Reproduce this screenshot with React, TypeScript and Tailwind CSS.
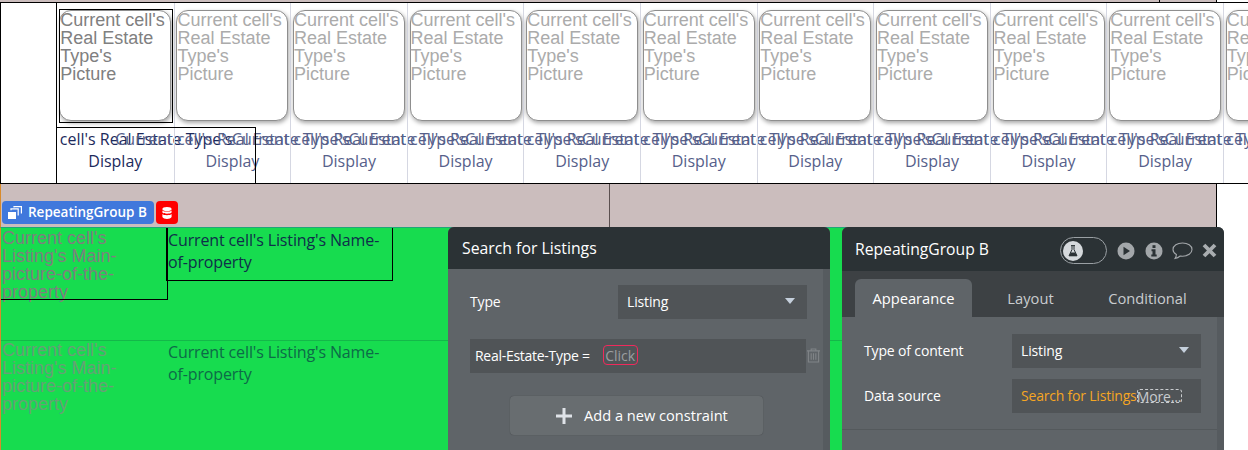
import React from 'react';

const cells = Array.from({ length: 11 });
const sans = "font-['Open_Sans',sans-serif]";
const arial = "font-['Liberation_Sans',Arial,sans-serif]";

const Caret = () => <span className="w-0 h-0 border-x-[5px] border-x-transparent border-t-[6px] border-t-[#c5d0dc]" />;

const RepeatIcon = () => (
  <svg width="14" height="13" viewBox="0 0 14 13" fill="none">
    <rect x="0" y="6" width="8" height="7" fill="#fff" />
    <path d="M3 4.2V2.8H10.2V9.5" stroke="#fff" strokeWidth="1.2" />
    <path d="M6 1.6V.6H13.4V7.5" stroke="#fff" strokeWidth="1.2" />
  </svg>
);

const DbIcon = () => (
  <svg width="10" height="12" viewBox="0 0 10 12" fill="#fff">
    <ellipse cx="5" cy="2" rx="4.6" ry="2" />
    <path d="M.4 3.4C1.4 5 8.6 5 9.6 3.4V5.6C8.6 7.2 1.4 7.2.4 5.6Z" />
    <path d="M.4 7C1.4 8.6 8.6 8.6 9.6 7V10C8.6 12.6 1.4 12.6.4 10Z" />
  </svg>
);

const Header = () => (
  <div className="absolute left-[1060px] top-[237px] flex items-center">
    <div className="w-[47px] h-[27px] rounded-full border border-[#9aa0a4] flex items-center pl-[2px]">
      <span className="w-5 h-5 rounded-full bg-[#d5d9dc] flex items-center justify-center">
        <svg width="10" height="12" viewBox="0 0 10 12">
          <path d="M3 .6H7M4 .6V4.500L1 10.800H9L6 4.500V.6" fill="none" stroke="#2b3235" strokeWidth="1" />
          <path d="M2.700 7.500H7.300L9 11H1Z" fill="#2b3235" />
        </svg>
      </span>
    </div>
    <svg className="ml-[10px]" width="18" height="18" viewBox="0 0 18 18">
      <circle cx="9" cy="9" r="8.5" fill="#a3a7aa" />
      <path d="M6.5 4.8 13 9 6.5 13.2Z" fill="#2b3235" />
    </svg>
    <svg className="ml-[10px]" width="18" height="18" viewBox="0 0 18 18">
      <circle cx="9" cy="9" r="8.5" fill="#a3a7aa" />
      <rect x="7.5" y="3.2" width="3" height="2.8" fill="#2b3235" />
      <path d="M6.5 7.2H10.5V12.6H11.7V14.6H6.3V12.6H7.500V9.200H6.500Z" fill="#2b3235" />
    </svg>
    <svg className="ml-[9px]" width="21" height="18" viewBox="0 0 21 18" fill="none">
      <path d="M10.5 1C5.3 1 1 3.6 1 7.5c0 2.2 1.4 3.9 3.4 5 0 1.4-.6 2.9-1.4 4 2.2-.3 4-1.4 5.2-2.5.9.1 1.7.2 2.4.2 5.2 0 9.4-2.9 9.400-6.700S15.700 1 10.500 1Z" stroke="#a3a7aa" strokeWidth="1.1" />
    </svg>
    <svg className="ml-[9px]" width="15" height="15" viewBox="0 0 15 15">
      <path d="M2 2 13 13M13 2 2 13" stroke="#a9adb0" strokeWidth="3.8" />
    </svg>
  </div>
);

export default function App() {
  return (
    <div className={`relative w-[1248px] h-[450px] overflow-hidden bg-white ${sans}`}>
      {/* top strip */}
      <div className="flex h-[3px]">
        <div className="w-[1160px] bg-[#cbbdbd] border-b border-black border-r" />
        <div className="w-[57px] bg-[#cbbdbd] border-b border-black border-r" />
        <div className="flex-1 bg-white border-b border-black" />
      </div>

      {/* first repeating group */}
      <div className="flex h-[181px] border-b border-black border-l border-l-black">
        <div className="w-[56px] shrink-0 border-r border-black" />
        <div className="flex-1 flex overflow-hidden">
          {cells.map((_, i) => (
            <div key={i} className="w-[116.6px] shrink-0 h-full border-l border-[#d5d7e2] first:border-l-0 relative flex flex-col items-center">
              <div className="mt-[7px] w-[112px] h-[111px] shrink-0 rounded-xl border border-[#8e8e8e] bg-white shadow-[1px_2px_4px_rgba(0,0,0,0.35)]">
                <p className={`${arial} text-[18px] leading-[18px] w-[110px] ${i === 0 ? 'text-[#808080]' : 'text-[#ababab]'}`}>
                  Current cell's Real Estate Type's Picture
                </p>
              </div>
              <div className={`mt-[7px] text-[16px] leading-[22px] text-center whitespace-nowrap ${i === 0 ? 'text-[#1c2a5c]' : 'text-[#56608a]'}`}>
                <p>Current cell's Real Estate Type's</p>
                <p>Display</p>
              </div>
            </div>
          ))}
        </div>
      </div>

      {/* gap band with the group's tabs */}
      <div className="relative flex h-[43px] w-[1217px] bg-[#cbbdbd] border-l border-l-[#d98a2b] border-r border-r-black">
        <div className="w-[609px] border-r border-[#5b5050]" />
        <div className="absolute left-[1px] top-[17px] flex gap-[2px]">
          <div className="h-[23px] w-[152px] rounded-sm bg-[#4078dc] text-white text-[13.5px] font-semibold flex items-center pl-[6px] gap-[6px]">
            <RepeatIcon />
            <span>RepeatingGroup B</span>
          </div>
          <div className="w-[22px] h-[23px] rounded-sm bg-[#ff0000] flex items-center justify-center">
            <DbIcon />
          </div>
        </div>
      </div>

      {/* second repeating group */}
      <div className="w-[1217px] h-[223px] bg-[#17dc4f] border-t border-t-[#1fa67a] border-l border-l-[#d98a2b] flex flex-col">
        {[0, 1].map((row) => (
          <div key={row} className={`flex shrink-0 ${row === 0 ? 'h-[113px] border-b border-[#14b84a]' : 'h-[109px]'}`}>
            <p className={`${arial} w-[166px] text-[18px] leading-[18px] pl-[1px] ${row === 0 ? 'pt-[1px] text-[#7f7f7f]' : 'text-[#67a077]'}`}>
              Current cell's Listing's Main-picture-of-the-property
            </p>
            <p className={`w-[225px] text-[16px] leading-[22px] pl-[1px] tracking-[-0.13px] ${row === 0 ? 'pt-[1px] text-[#0f2f4a]' : 'text-[#0d6a48]'}`}>
              Current cell's Listing's Name-of-property
            </p>
          </div>
        ))}
      </div>

      {/* selection outlines */}
      <div className="absolute left-[59px] top-[9px] w-[114px] h-[114px] border border-black" />
      <div className="absolute left-[57px] top-[127px] w-[199px] h-[56px] border-t border-r border-black" />
      <div className="absolute left-[1px] top-[228px] w-[167px] h-[72px] border-r border-b border-black" />
      <div className="absolute left-[166px] top-[228px] w-[227px] h-[53px] border-l-2 border-r border-b border-black" />

      {/* search panel */}
      <div className="absolute left-[448px] top-[227px] w-[382px] h-[223px] rounded-t-md bg-[#5f6468] text-white overflow-hidden">
        <div className="h-[42px] bg-[#2b3235] flex items-center pl-[14px] pt-[2px] text-[15.8px]">Search for Listings</div>
        <div className="absolute right-0 top-[42px] bottom-0 w-[7px] bg-[#565b5f]" />
        <div className="pl-[22px] pt-[16px]">
          <div className="flex items-center justify-between w-[337px]">
            <span className="text-[14px] pb-[2px] tracking-[-0.15px]">Type</span>
            <div className="w-[189px] h-[34px] bg-[#505457] flex items-center justify-between pl-[9px] pr-[12px] pb-[2px] text-[14px] tracking-[-0.15px]">
              <span>Listing</span>
              <Caret />
            </div>
          </div>
          <div className="flex items-center mt-[20px] relative">
            <div className="w-[336px] h-[34px] shrink-0 bg-[#505457] flex items-center pl-[5px] pb-[2px] text-[14px]">
              <span className="tracking-[-0.28px]">Real-Estate-Type =</span>
              <span className="ml-[13px] h-[20px] w-[35px] rounded-[4px] border border-[#f02a5c] text-[#9a9ea1] flex items-center justify-center">Click</span>
            </div>
            <svg className="ml-[1px] shrink-0 mb-[2px]" width="13" height="15" viewBox="0 0 14 16" fill="none" stroke="#808487" strokeWidth="1.2">
              <path d="M0 3H14M4.500 3V1H9.500V3" />
              <path d="M1.500 3V15H12.500V3" />
              <path d="M4.500 5.500V12.500M7 5.500V12.500M9.500 5.500V12.500" />
            </svg>
          </div>
          <div className="mt-[23px] ml-[40px] w-[253px] h-[39px] rounded-sm bg-[#686d70] shadow-[0_0_1px_rgba(0,0,0,0.4)] flex items-center pl-[46px] gap-[12px] text-[14.6px]">
            <svg width="16" height="16" viewBox="0 0 16 16"><path d="M8 0V16M0 8H16" stroke="#dfe3e8" strokeWidth="3" /></svg>
            <span>Add a new constraint</span>
          </div>
        </div>
      </div>

      {/* property editor */}
      <div className="absolute left-[842px] top-[227px] w-[382px] h-[223px] rounded-t-md bg-[#5f6468] text-white overflow-hidden">
        <div className="h-[44px] bg-[#2b3235] flex items-center pl-[13px] pt-[2px] text-[15.7px]">RepeatingGroup B</div>
        <div className="h-[46px] bg-[#3d4144] flex items-end pl-[13px] text-[14.7px] text-[#c9cccf]">
          <div className="w-[117px] h-[38px] rounded-t-md bg-[#5f6468] text-white flex items-center justify-center">Appearance</div>
          <div className="w-[117px] h-[38px] flex items-center justify-center">Layout</div>
          <div className="w-[117px] h-[38px] flex items-center justify-center">Conditional</div>
        </div>
        <div className="absolute right-0 top-[90px] bottom-0 w-[7px] bg-[#565b5f]" />
        <div className="pt-[17px] pl-[22px] text-[14px] tracking-[-0.15px] w-[375px]">
          <div className="flex items-center">
            <span className="w-[148px] pb-[2px]">Type of content</span>
            <div className="w-[189px] h-[34px] bg-[#505457] flex items-center justify-between pl-[9px] pr-[12px] pb-[2px]">
              <span>Listing</span>
              <Caret />
            </div>
          </div>
          <div className="flex items-center mt-[11px]">
            <span className="w-[148px] pb-[2px]">Data source</span>
            <div className="w-[189px] h-[34px] bg-[#505457] flex items-center pl-[9px] pb-[2px]">
              <span className="text-[#f5a623] tracking-[-0.2px]">Search for Listings</span>
              <span className="h-[14px] w-[45px] mt-[2px] flex items-center justify-center rounded-[3px] border border-dashed border-[#c9cccf] text-[#c9cccf]">More...</span>
            </div>
          </div>
        </div>
        <div className="mt-[16px] w-[375px] h-px bg-[#54595c]" />
      </div>
      <Header />
    </div>
  );
}
